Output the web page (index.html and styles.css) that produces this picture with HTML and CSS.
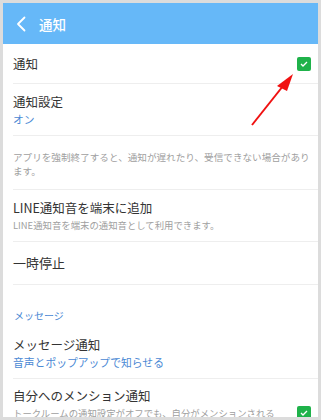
FILE: index.html
```html
<!DOCTYPE html>
<html lang="ja">
<head>
<meta charset="UTF-8">
<meta name="viewport" content="width=device-width, initial-scale=1.0">
<title>通知</title>
<link rel="stylesheet" href="styles.css">
</head>
<body>
<div class="screen">
  <div class="header">
    <svg class="back" width="10" height="16" viewBox="0 0 10 16">
      <path d="M8.5 1.5 L2 8 L8.5 14.5" fill="none" stroke="#fff" stroke-width="1.8" stroke-linecap="round" stroke-linejoin="round"/>
    </svg>
    <span class="header-title">通知</span>
  </div>

  <div class="row row-single first">
    <span class="title">通知</span>
    <span class="check"><svg width="8" height="6" viewBox="0 0 8 6"><path d="M1 3 L3 5 L7 1" fill="none" stroke="#fff" stroke-width="1.3"/></svg></span>
  </div>
  <div class="row row-double">
    <div class="title">通知設定</div>
    <div class="sub blue">オン</div>
  </div>
  <div class="row desc">
    アプリを強制終了すると、通知が遅れたり、受信できない場合があり<br>ます。
  </div>
  <div class="row row-double">
    <div class="title">LINE通知音を端末に追加</div>
    <div class="sub grey">LINE通知音を端末の通知音として利用できます。</div>
  </div>
  <div class="row row-single pause">
    <span class="title">一時停止</span>
  </div>

  <div class="section">メッセージ</div>

  <div class="row row-double">
    <div class="title">メッセージ通知</div>
    <div class="sub blue">音声とポップアップで知らせる</div>
  </div>
  <div class="row row-check last">
    <div class="text">
      <div class="title">自分へのメンション通知</div>
      <div class="sub grey">トークルームの通知設定がオフでも、自分がメンションされる</div>
    </div>
    <span class="check"><svg width="8" height="6" viewBox="0 0 8 6"><path d="M1 3 L3 5 L7 1" fill="none" stroke="#fff" stroke-width="1.3"/></svg></span>
  </div>

  <svg class="arrow" width="315" height="414" viewBox="0 0 315 414">
    <line x1="249" y1="122" x2="280" y2="83" stroke="#f01010" stroke-width="2"/>
    <polygon points="290,71 274,83 284,88" fill="#f01010"/>
  </svg>
</div>
</body>
</html>
```

FILE: styles.css
```css
body {
  margin: 0;
  padding: 3px;
  background-color: #dcdcdc;
  font-family: "Noto Sans CJK JP", "Noto Sans", sans-serif;
}
.screen {
  position: relative;
  width: 315px;
  height: 414px;
  background-color: #fff;
  overflow: hidden;
}
.header {
  height: 41px;
  background-color: #66b8f8;
  display: flex;
  align-items: center;
  padding-left: 13px;
}
.back {
  margin-right: 13px;
}
.header-title {
  color: #fff;
  font-size: 13.5px;
  font-weight: 500;
}
.row {
  margin-left: 10px;
  border-bottom: 1px solid #eeeeee;
  color: #333;
}
.title {
  font-size: 12.5px;
  line-height: 18px;
}
.row-single {
  display: flex;
  align-items: center;
  justify-content: space-between;
  padding-right: 7px;
}
.first {
  height: 39px;
}
.pause {
  height: 42px;
}
.pause .title {
  font-size: 13px;
}
.row-double {
  height: 42px;
  padding-top: 9px;
}
.sub {
  line-height: 16px;
  white-space: nowrap;
}
.blue {
  color: #4a88d4;
  font-size: 10.8px;
}
.grey {
  color: #a0a0a0;
  font-size: 9.4px;
}
.desc {
  height: 38px;
  padding-top: 15px;
  padding-right: 4px;
  font-size: 9.6px;
  line-height: 13.5px;
  color: #a0a0a0;
  white-space: nowrap;
}
.section {
  height: 42px;
  box-sizing: border-box;
  padding: 24px 0 0 11px;
  font-size: 10px;
  line-height: 14px;
  color: #4a88d4;
}
.row-check {
  display: flex;
  justify-content: space-between;
  padding-top: 8px;
  padding-right: 7px;
  border-bottom: none;
}
.row-check .text {
  min-width: 0;
  overflow: hidden;
}
.row-check .check {
  margin-top: 19px;
  margin-left: 20px;
}
.check {
  width: 14px;
  height: 14px;
  border-radius: 2px;
  background-color: #1fb24a;
  display: flex;
  align-items: center;
  justify-content: center;
  flex-shrink: 0;
}
.arrow {
  position: absolute;
  left: 0;
  top: 0;
  pointer-events: none;
}
```
